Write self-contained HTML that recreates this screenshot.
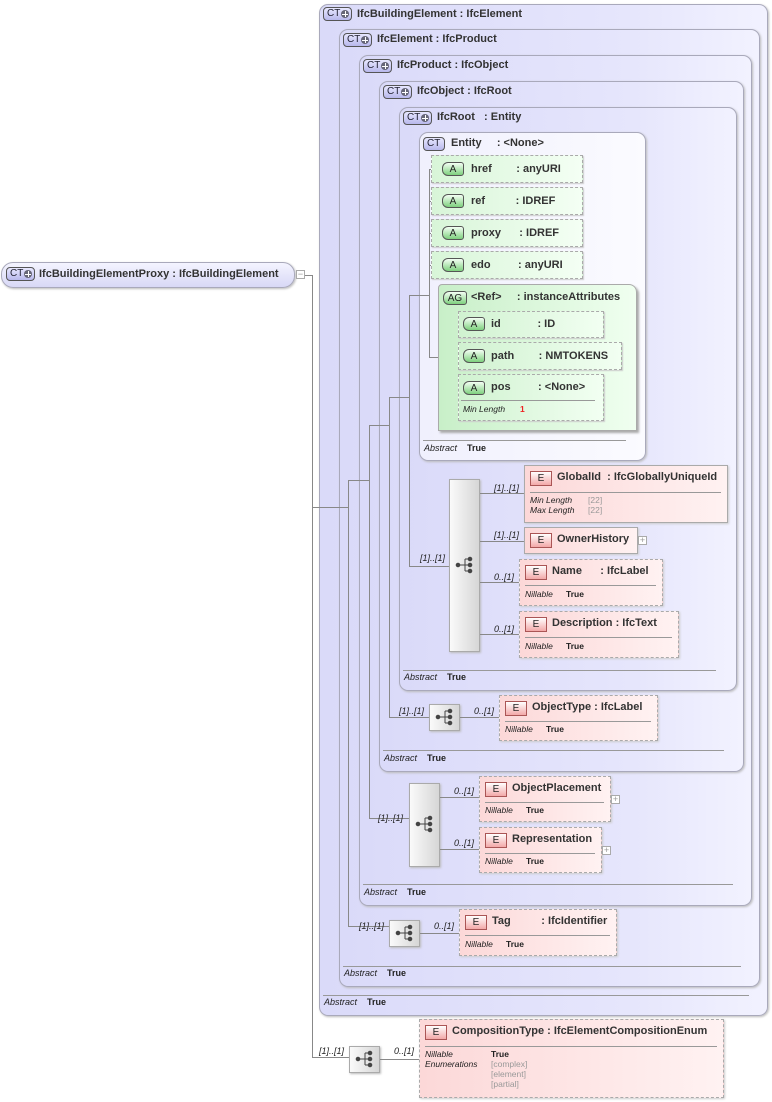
<!DOCTYPE html>
<html><head><meta charset="utf-8"><style>
*{margin:0;padding:0;box-sizing:border-box}
body{width:772px;height:1102px;background:#fff;position:relative;overflow:hidden;font-family:"Liberation Sans",sans-serif;font-size:11px;color:#222}
.a{position:absolute}
.ct{position:absolute;border:1px solid #a9a9bb;border-radius:9px;background:linear-gradient(to right,#dadaf9,#e6e6fc 70%,#f2f2ff);box-shadow:1px 1px 2px #bbb}
.t{position:absolute;font-weight:bold;font-size:11px;white-space:pre;color:#333}
.badge{position:absolute;height:14px;border:1px solid #555;border-radius:4px;background:linear-gradient(#e8e8ff,#b8b8ec);font-size:10px;line-height:12px;padding-left:3px;color:#223}
.badge i{position:absolute;right:2px;top:2px;width:8px;height:8px;border-radius:50%;background:#667;}
.badge i:before{content:"";position:absolute;left:1px;top:3.5px;width:6px;height:1px;background:#fff}
.badge i:after{content:"";position:absolute;left:3.5px;top:1px;width:1px;height:6px;background:#fff}
.hr{position:absolute;height:1px;background:#999}
.ab{position:absolute;font-size:9px;font-style:italic;white-space:pre}
.ab b{font-style:normal;margin-left:10px}
.attr{position:absolute;height:28px;border:1px dashed #aaa;background:linear-gradient(to right,#d8f5d8,#f4fff4);box-shadow:1px 1px 1px #ccc}
.A{position:absolute;left:10px;top:6px;width:22px;height:14px;border:1px solid #555;border-radius:6px 3px 3px 6px;background:linear-gradient(#f4fff4,#7ed07e);font-size:10px;text-align:center;line-height:13px}
.el{position:absolute;border:1px dashed #aaa;background:linear-gradient(to right,#fcd8d8,#fff2f2);box-shadow:1px 1px 2px #ccc}
.el.s{border:1px solid #aaa}
.E{position:absolute;left:5px;top:5px;width:22px;height:15px;border:1px solid #a55;background:linear-gradient(#fff,#f3a8a8);font-size:10px;text-align:center;line-height:14px}
.et{position:absolute;left:32px;top:5px;font-weight:bold;font-size:11px;white-space:pre;color:#333}
.sep{position:absolute;left:5px;right:6px;height:1px;background:#999}
.p{position:absolute;font-size:8.5px;font-style:italic;white-space:pre;line-height:10px}
.v{position:absolute;font-size:8.5px;font-weight:bold;white-space:pre;line-height:10px}
.g{position:absolute;font-size:8.5px;color:#999;white-space:pre;line-height:10px}
.lbl{position:absolute;font-size:9px;font-style:italic;white-space:pre}
.seq{position:absolute;border:1px solid #aaa;background:linear-gradient(to right,#fafafa,#d6d6d6);box-shadow:1px 1px 2px #bbb}
.ln{position:absolute;background:#888}
.pl{position:absolute;width:9px;height:9px;border:1px solid #aaa;background:#fff;font-size:9px;line-height:7px;text-align:center;color:#999}
</style></head><body>

<div class="ct" style="left:319px;top:4px;width:449px;height:1012px"></div>
<div class="ct" style="left:339px;top:29px;width:421px;height:958px"></div>
<div class="ct" style="left:359px;top:55px;width:393px;height:851px"></div>
<div class="ct" style="left:379px;top:81px;width:365px;height:691px"></div>
<div class="ct" style="left:399px;top:107px;width:338px;height:584px"></div>
<div class="ct" style="left:419px;top:132px;width:227px;height:329px;background:linear-gradient(to right,#f0f0fd,#fbfbff)"></div>

<div class="badge" style="left:323px;top:7px;width:29px">CT<i></i></div><div class="t" style="left:357px;top:8px">IfcBuildingElement : IfcElement</div>
<div class="badge" style="left:343px;top:33px;width:29px">CT<i></i></div><div class="t" style="left:377px;top:33px">IfcElement : IfcProduct</div>
<div class="badge" style="left:363px;top:59px;width:29px">CT<i></i></div><div class="t" style="left:397px;top:59px">IfcProduct : IfcObject</div>
<div class="badge" style="left:383px;top:85px;width:29px">CT<i></i></div><div class="t" style="left:417px;top:85px">IfcObject : IfcRoot</div>
<div class="badge" style="left:403px;top:111px;width:29px">CT<i></i></div><div class="t" style="left:437px;top:111px">IfcRoot   : Entity</div>
<div class="badge" style="left:423px;top:137px;width:22px">CT</div><div class="t" style="left:451px;top:137px">Entity     : &lt;None&gt;</div>

<div class="hr" style="left:323px;top:995px;width:426px"></div><div class="ab" style="left:324px;top:997px">Abstract<b>True</b></div>
<div class="hr" style="left:343px;top:966px;width:398px"></div><div class="ab" style="left:344px;top:968px">Abstract<b>True</b></div>
<div class="hr" style="left:363px;top:884px;width:370px"></div><div class="ab" style="left:364px;top:887px">Abstract<b>True</b></div>
<div class="hr" style="left:383px;top:750px;width:341px"></div><div class="ab" style="left:384px;top:753px">Abstract<b>True</b></div>
<div class="hr" style="left:403px;top:670px;width:313px"></div><div class="ab" style="left:404px;top:672px">Abstract<b>True</b></div>
<div class="hr" style="left:423px;top:440px;width:203px"></div><div class="ab" style="left:424px;top:443px">Abstract<b>True</b></div>

<div class="ct" style="left:1px;top:262px;width:294px;height:26px;border-radius:12px;background:linear-gradient(#f4f4ff,#d8d8f6)"></div>
<div class="badge" style="left:6px;top:267px;width:29px">CT<i></i></div>
<div class="t" style="left:39px;top:268px">IfcBuildingElementProxy : IfcBuildingElement</div>
<div class="pl" style="left:296px;top:270px">−</div>

<div class="ln" style="left:305px;top:275px;width:8px;height:1px"></div>
<div class="ln" style="left:312px;top:275px;width:1px;height:783px"></div>
<div class="ln" style="left:312px;top:507px;width:37px;height:1px"></div>
<div class="ln" style="left:312px;top:1057px;width:37px;height:1px"></div>
<div class="ln" style="left:348px;top:480px;width:1px;height:447px"></div>
<div class="ln" style="left:348px;top:480px;width:22px;height:1px"></div>
<div class="ln" style="left:348px;top:926px;width:41px;height:1px"></div>
<div class="ln" style="left:369px;top:425px;width:1px;height:394px"></div>
<div class="ln" style="left:369px;top:425px;width:21px;height:1px"></div>
<div class="ln" style="left:369px;top:818px;width:40px;height:1px"></div>
<div class="ln" style="left:389px;top:397px;width:1px;height:321px"></div>
<div class="ln" style="left:389px;top:397px;width:21px;height:1px"></div>
<div class="ln" style="left:389px;top:717px;width:40px;height:1px"></div>
<div class="ln" style="left:409px;top:295px;width:1px;height:272px"></div>
<div class="ln" style="left:409px;top:295px;width:21px;height:1px"></div>
<div class="ln" style="left:409px;top:566px;width:40px;height:1px"></div>
<div class="ln" style="left:429px;top:169px;width:1px;height:188px"></div>
<div class="ln" style="left:429px;top:169px;width:12px;height:1px"></div>
<div class="ln" style="left:429px;top:201px;width:12px;height:1px"></div>
<div class="ln" style="left:429px;top:233px;width:12px;height:1px"></div>
<div class="ln" style="left:429px;top:265px;width:12px;height:1px"></div>
<div class="ln" style="left:429px;top:357px;width:21px;height:1px"></div>
<div class="ln" style="left:449px;top:324px;width:1px;height:76px"></div>
<div class="ln" style="left:449px;top:324px;width:10px;height:1px"></div>
<div class="ln" style="left:449px;top:399px;width:10px;height:1px"></div>

<div class="attr" style="left:431px;top:155px;width:152px"><div class="A">A</div><div class="t" style="left:39px;top:7px">href        : anyURI</div></div>
<div class="attr" style="left:431px;top:187px;width:152px"><div class="A">A</div><div class="t" style="left:39px;top:7px">ref          : IDREF</div></div>
<div class="attr" style="left:431px;top:219px;width:152px"><div class="A">A</div><div class="t" style="left:39px;top:7px">proxy      : IDREF</div></div>
<div class="attr" style="left:431px;top:251px;width:152px"><div class="A">A</div><div class="t" style="left:39px;top:7px">edo         : anyURI</div></div>

<div class="a" style="left:438px;top:284px;width:199px;height:147px;border:1px solid #aaa;border-radius:4px 8px 0 0;background:linear-gradient(to right,#c8efc8,#f0fff0);box-shadow:2px 2px 2px #aaa"></div>
<div class="A" style="left:443px;top:291px;width:24px">AG</div>
<div class="t" style="left:471px;top:291px">&lt;Ref&gt;     : instanceAttributes</div>
<div class="attr" style="left:458px;top:311px;width:146px;height:27px;background:linear-gradient(to right,#d0f2d0,#f2fff2)"><div class="A" style="left:4px;top:5px">A</div><div class="t" style="left:32px;top:6px">id            : ID</div></div>
<div class="attr" style="left:458px;top:342px;width:164px;height:28px;background:linear-gradient(to right,#d0f2d0,#f2fff2)"><div class="A" style="left:4px">A</div><div class="t" style="left:32px;top:7px">path        : NMTOKENS</div></div>
<div class="attr" style="left:458px;top:374px;width:146px;height:47px;background:linear-gradient(to right,#d0f2d0,#f2fff2)"><div class="A" style="left:4px">A</div><div class="t" style="left:32px;top:6px">pos         : &lt;None&gt;</div><div class="sep" style="top:25px;left:2px;right:8px"></div><div class="p" style="left:4px;top:29px">Min Length</div><div class="v" style="left:61px;top:29px;color:#e22">1</div></div>

<div class="seq" style="left:449px;top:479px;width:31px;height:173px"></div>
<svg class="a" style="left:455px;top:556px" width="20" height="18"><g fill="#444" stroke="#444"><circle cx="3" cy="9" r="1.8"/><line x1="3" y1="9" x2="10" y2="9"/><line x1="10" y1="3" x2="10" y2="15"/><line x1="10" y1="3" x2="15" y2="3"/><line x1="10" y1="15" x2="15" y2="15"/><line x1="10" y1="9" x2="15" y2="9"/><circle cx="15" cy="3" r="1.8"/><circle cx="15" cy="9" r="1.8"/><circle cx="15" cy="15" r="1.8"/></g></svg>
<div class="lbl" style="left:420px;top:553px">[1]..[1]</div>
<div class="ln" style="left:480px;top:493px;width:44px;height:1px"></div>
<div class="ln" style="left:480px;top:541px;width:44px;height:1px"></div>
<div class="ln" style="left:480px;top:582px;width:39px;height:1px"></div>
<div class="ln" style="left:480px;top:634px;width:39px;height:1px"></div>
<div class="lbl" style="left:494px;top:483px">[1]..[1]</div>
<div class="lbl" style="left:494px;top:530px">[1]..[1]</div>
<div class="lbl" style="left:494px;top:572px">0..[1]</div>
<div class="lbl" style="left:494px;top:624px">0..[1]</div>

<div class="el s" style="left:524px;top:465px;width:204px;height:58px"><div class="E">E</div><div class="et">GlobalId  : IfcGloballyUniqueId</div><div class="sep" style="top:26px"></div><div class="p" style="left:5px;top:29px">Min Length<br>Max Length</div><div class="g" style="left:63px;top:29px">[22]<br>[22]</div></div>
<div class="el s" style="left:524px;top:527px;width:114px;height:27px"><div class="E">E</div><div class="et">OwnerHistory</div></div>
<div class="pl" style="left:638px;top:536px">+</div>
<div class="el" style="left:519px;top:559px;width:144px;height:47px"><div class="E">E</div><div class="et">Name      : IfcLabel</div><div class="sep" style="top:25px"></div><div class="p" style="left:5px;top:29px">Nillable</div><div class="v" style="left:46px;top:29px">True</div></div>
<div class="el" style="left:519px;top:611px;width:160px;height:47px"><div class="E">E</div><div class="et">Description : IfcText</div><div class="sep" style="top:25px"></div><div class="p" style="left:5px;top:29px">Nillable</div><div class="v" style="left:46px;top:29px">True</div></div>

<div class="seq" style="left:429px;top:704px;width:31px;height:27px"></div>
<svg class="a" style="left:435px;top:708px" width="20" height="18"><g fill="#444" stroke="#444"><circle cx="3" cy="9" r="1.8"/><line x1="3" y1="9" x2="10" y2="9"/><line x1="10" y1="3" x2="10" y2="15"/><line x1="10" y1="3" x2="15" y2="3"/><line x1="10" y1="15" x2="15" y2="15"/><line x1="10" y1="9" x2="15" y2="9"/><circle cx="15" cy="3" r="1.8"/><circle cx="15" cy="9" r="1.8"/><circle cx="15" cy="15" r="1.8"/></g></svg>
<div class="ln" style="left:460px;top:717px;width:39px;height:1px"></div>
<div class="lbl" style="left:399px;top:706px">[1]..[1]</div>
<div class="lbl" style="left:474px;top:706px">0..[1]</div>
<div class="el" style="left:499px;top:695px;width:159px;height:46px"><div class="E">E</div><div class="et">ObjectType : IfcLabel</div><div class="sep" style="top:25px"></div><div class="p" style="left:5px;top:28px">Nillable</div><div class="v" style="left:46px;top:28px">True</div></div>

<div class="seq" style="left:409px;top:783px;width:31px;height:84px"></div>
<svg class="a" style="left:415px;top:815px" width="20" height="18"><g fill="#444" stroke="#444"><circle cx="3" cy="9" r="1.8"/><line x1="3" y1="9" x2="10" y2="9"/><line x1="10" y1="3" x2="10" y2="15"/><line x1="10" y1="3" x2="15" y2="3"/><line x1="10" y1="15" x2="15" y2="15"/><line x1="10" y1="9" x2="15" y2="9"/><circle cx="15" cy="3" r="1.8"/><circle cx="15" cy="9" r="1.8"/><circle cx="15" cy="15" r="1.8"/></g></svg>
<div class="ln" style="left:440px;top:797px;width:39px;height:1px"></div>
<div class="ln" style="left:440px;top:849px;width:39px;height:1px"></div>
<div class="lbl" style="left:378px;top:813px">[1]..[1]</div>
<div class="lbl" style="left:454px;top:786px">0..[1]</div>
<div class="lbl" style="left:454px;top:838px">0..[1]</div>
<div class="el" style="left:479px;top:776px;width:132px;height:46px"><div class="E">E</div><div class="et">ObjectPlacement</div><div class="sep" style="top:25px"></div><div class="p" style="left:5px;top:28px">Nillable</div><div class="v" style="left:46px;top:28px">True</div></div>
<div class="pl" style="left:611px;top:795px">+</div>
<div class="el" style="left:479px;top:827px;width:123px;height:46px"><div class="E">E</div><div class="et">Representation</div><div class="sep" style="top:25px"></div><div class="p" style="left:5px;top:28px">Nillable</div><div class="v" style="left:46px;top:28px">True</div></div>
<div class="pl" style="left:602px;top:846px">+</div>

<div class="seq" style="left:389px;top:920px;width:31px;height:27px"></div>
<svg class="a" style="left:395px;top:924px" width="20" height="18"><g fill="#444" stroke="#444"><circle cx="3" cy="9" r="1.8"/><line x1="3" y1="9" x2="10" y2="9"/><line x1="10" y1="3" x2="10" y2="15"/><line x1="10" y1="3" x2="15" y2="3"/><line x1="10" y1="15" x2="15" y2="15"/><line x1="10" y1="9" x2="15" y2="9"/><circle cx="15" cy="3" r="1.8"/><circle cx="15" cy="9" r="1.8"/><circle cx="15" cy="15" r="1.8"/></g></svg>
<div class="ln" style="left:420px;top:933px;width:39px;height:1px"></div>
<div class="lbl" style="left:359px;top:921px">[1]..[1]</div>
<div class="lbl" style="left:434px;top:921px">0..[1]</div>
<div class="el" style="left:459px;top:909px;width:158px;height:47px"><div class="E">E</div><div class="et">Tag          : IfcIdentifier</div><div class="sep" style="top:25px"></div><div class="p" style="left:5px;top:29px">Nillable</div><div class="v" style="left:46px;top:29px">True</div></div>

<div class="seq" style="left:349px;top:1046px;width:31px;height:27px"></div>
<svg class="a" style="left:355px;top:1050px" width="20" height="18"><g fill="#444" stroke="#444"><circle cx="3" cy="9" r="1.8"/><line x1="3" y1="9" x2="10" y2="9"/><line x1="10" y1="3" x2="10" y2="15"/><line x1="10" y1="3" x2="15" y2="3"/><line x1="10" y1="15" x2="15" y2="15"/><line x1="10" y1="9" x2="15" y2="9"/><circle cx="15" cy="3" r="1.8"/><circle cx="15" cy="9" r="1.8"/><circle cx="15" cy="15" r="1.8"/></g></svg>
<div class="ln" style="left:380px;top:1059px;width:39px;height:1px"></div>
<div class="lbl" style="left:319px;top:1046px">[1]..[1]</div>
<div class="lbl" style="left:394px;top:1046px">0..[1]</div>
<div class="el" style="left:419px;top:1019px;width:305px;height:79px"><div class="E">E</div><div class="et">CompositionType : IfcElementCompositionEnum</div><div class="sep" style="top:26px"></div><div class="p" style="left:5px;top:29px">Nillable<br>Enumerations</div><div class="v" style="left:71px;top:29px">True</div><div class="g" style="left:71px;top:39px">[complex]<br>[element]<br>[partial]</div></div>

</body></html>
